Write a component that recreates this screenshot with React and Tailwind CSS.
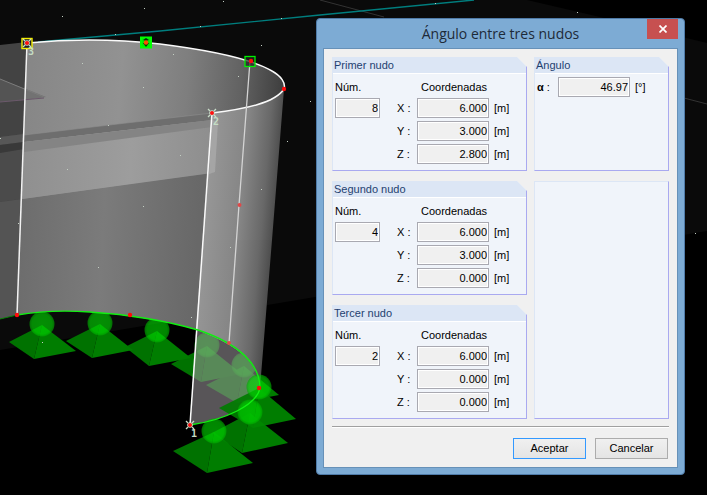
import React from 'react';

const nodes = [
  { id: 'primer', title: 'Primer nudo', num: '8', x: '6.000', y: '3.000', z: '2.800' },
  { id: 'segundo', title: 'Segundo nudo', num: '4', x: '6.000', y: '3.000', z: '0.000' },
  { id: 'tercer', title: 'Tercer nudo', num: '2', x: '6.000', y: '0.000', z: '0.000' },
];

// apex of every support, with its left, bottom and right corners
const backSupports = [
  { x: 42, y: 325, l: [9, 342], b: [34, 359], r: [76, 351] },
  { x: 100, y: 324, l: [66, 341], b: [92, 358], r: [133, 350] },
  { x: 157, y: 331, l: [125, 347], b: [149, 366], r: [191, 358] },
  { x: 207, y: 346, l: [171, 364], b: [201, 382], r: [242, 374] },
  { x: 244, y: 366, l: [206, 385], b: [237, 403], r: [279, 395] },
];

const frontSupports = [
  { x: 259, y: 388, l: [219, 408], b: [253, 428], r: [296, 419] },
  { x: 250, y: 413, l: [212, 433], b: [242, 453], r: [288, 443] },
  { x: 214, y: 432, l: [173, 451], b: [207, 473], r: [253, 463] },
];

const stars = [
  [62, 16], [144, 8], [223, 1], [200, 26], [115, 34], [281, 18], [261, 45], [82, 63],
  [173, 54], [143, 87], [238, 76], [310, 101], [287, 141], [180, 155], [108, 125],
  [67, 169], [143, 206], [98, 267], [261, 189], [230, 247], [191, 317], [42, 342],
  [0, 138], [18, 223], [435, 3], [577, 12], [695, 233],
];

const redDots = [
  [284, 89], [251, 61], [17, 315], [130, 315], [259, 388],
];

function Support({ x, y, l, b, r }) {
  return (
    <g>
      <path d={`M${x} ${y} L${l[0]} ${l[1]} L${b[0]} ${b[1]} Z`} fill="#007c00" fillOpacity="0.92" />
      <path d={`M${x} ${y} L${b[0]} ${b[1]} L${r[0]} ${r[1]} Z`} fill="#008800" fillOpacity="0.92" />
      <circle cx={x} cy={y - 1} r="12.5" fill="url(#ball)" fillOpacity="0.62" />
    </g>
  );
}

function Cross({ x, y }) {
  return (
    <path
      d={`M${x - 4} ${y - 4} l8 8 M${x + 4} ${y - 4} l-8 8 M${x} ${y - 3} v6 M${x - 3} ${y} h6`}
      stroke="#c8dcc8"
      strokeWidth="1.3"
    />
  );
}

function Scene() {
  return (
    <svg
      className="absolute inset-0 h-full w-full"
      viewBox="0 0 707 495"
      preserveAspectRatio="xMinYMin slice"
      fill="none"
      aria-hidden="true"
    >
      <defs>
        <linearGradient id="wall" gradientUnits="userSpaceOnUse" x1="20" y1="0" x2="286" y2="20">
          <stop offset="0" stopColor="#858585" />
          <stop offset="0.4" stopColor="#929292" />
          <stop offset="0.65" stopColor="#7e7e7e" />
          <stop offset="0.85" stopColor="#626262" />
          <stop offset="1" stopColor="#404040" />
        </linearGradient>
        <linearGradient id="lower" gradientUnits="userSpaceOnUse" x1="20" y1="0" x2="210" y2="10">
          <stop offset="0" stopColor="#6b6b6b" />
          <stop offset="0.5" stopColor="#7b7b7b" />
          <stop offset="1" stopColor="#686868" />
        </linearGradient>
        <linearGradient id="band" gradientUnits="userSpaceOnUse" x1="20" y1="0" x2="218" y2="10">
          <stop offset="0" stopColor="#8e8e8e" />
          <stop offset="0.6" stopColor="#9d9d9d" />
          <stop offset="1" stopColor="#8e8e8e" />
        </linearGradient>
        <linearGradient id="front" gradientUnits="userSpaceOnUse" x1="205" y1="200" x2="278" y2="206">
          <stop offset="0" stopColor="#979797" />
          <stop offset="0.5" stopColor="#858585" />
          <stop offset="0.8" stopColor="#686868" />
          <stop offset="1" stopColor="#484848" />
        </linearGradient>
        <linearGradient id="frontLow" gradientUnits="userSpaceOnUse" x1="195" y1="300" x2="269" y2="306">
          <stop offset="0" stopColor="#979797" />
          <stop offset="0.5" stopColor="#858585" />
          <stop offset="0.8" stopColor="#686868" />
          <stop offset="1" stopColor="#484848" />
        </linearGradient>
        <radialGradient id="ball">
          <stop offset="0" stopColor="#00e000" />
          <stop offset="0.8" stopColor="#00d800" />
          <stop offset="1" stopColor="#00a800" />
        </radialGradient>
      </defs>

      {/* ground plane and grid lines */}
      <path d="M0 0 H527 L600 17 L707 43 V231 L0 350 Z" fill="#0a0a0a" />
      <path d="M320 0 L384 17 M684 98 L707 104" stroke="#333" />
      <path d="M38 42 L160 31 L320 15 L474 0" stroke="#007e7e" strokeWidth="1.4" />

      {backSupports.map((s) => (
        <Support key={s.x} {...s} />
      ))}

      {/* dark outer side on the left */}
      <path d="M0 45 L27 42 L17 315 L0 319 Z" fill="#434343" />
      <path d="M0 137 L24 134 L22 199 L0 202 Z" fill="#4b4b4b" />
      <path d="M0 137 L24 134 V142 L0 145 Z" fill="#575757" />
      <path d="M0 145 L24 142 V149 L0 153 Z" fill="#393939" />
      <path d="M0 202 L22 199 L17 315 L0 319 Z" fill="#545454" />

      {/* curved wall */}
      <path
        d="M27 43 C70 39 115 39 160 44 C200 49 250 58 272 71 C281 76 286 83 284 89 C275 103 245 109 212 113 L198 330 C160 319 120 314 90 312 C60 310 40 311 17 315 Z"
        fill="url(#wall)"
      />
      <path d="M22 199 L150 181 L212 173 L198 330 C160 319 120 314 90 312 C60 310 40 311 17 315 Z" fill="url(#lower)" />
      <path d="M24 135 L212 113 L212 120 L24 142 Z" fill="#6e6e6e" />
      <path d="M24 135 L212 113" stroke="#8e8e8e" strokeOpacity="0.6" />
      <path d="M24 142 L212 120 L212 173 L22 199 Z" fill="url(#band)" />
      <path d="M24 142 L212 120 V127 L24 152 Z" fill="#848484" />
      <path d="M0 79 L26 89 L25 100 L0 102 Z" fill="#545454" />
      <path d="M26 89 L46 97 L25 100 Z" fill="#727272" />
      <path d="M0 79 L44 97" stroke="#7c7c7c" />
      <path d="M0 102 L44 98" stroke="#6b586b" />

      {/* front strip */}
      <path d="M212 113 C245 109 275 103 284 89 L272 240 L203 240 Z" fill="url(#front)" />
      <path d="M203 240 L272 240 L260 388 C259 365 240 346 196 330 Z" fill="url(#frontLow)" />
      <path d="M212 120 L218 122 L215 172 L209 174 Z" fill="#a9a9a9" fillOpacity="0.8" />
      <path
        d="M196 330 C240 346 259 365 260 388 C257 405 225 420 190 425 Z"
        fill="#989398"
        fillOpacity="0.58"
      />

      {frontSupports.map((s) => (
        <Support key={s.x} {...s} />
      ))}

      {/* edges */}
      <path
        d="M27 43 C70 39 115 39 160 44 C200 49 250 58 272 71 C281 76 286 83 284 89 C275 103 245 109 212 113"
        stroke="#fafafa"
        strokeWidth="1.5"
      />
      <path d="M27 43 L17 315" stroke="#f2f2f2" strokeWidth="1.5" />
      <path d="M212 113 L190 425" stroke="#fafafa" strokeWidth="1.5" />
      <path d="M250 61 L239 205 L229 343" stroke="#d4d4d4" strokeWidth="1.3" />
      <path d="M0 319 L17 315" stroke="#078007" />
      <path
        d="M17 315 C40 311 60 310 90 312 C120 314 160 319 198 330 C240 344 260 365 260 388 C257 405 225 420 190 425"
        stroke="#12ee12"
        strokeWidth="1.4"
      />

      {stars.map(([x, y]) => (
        <rect key={`${x}-${y}`} x={x} y={y} width="1" height="1" fill="#c4d0c4" />
      ))}

      {/* selected nodes */}
      <rect x="22" y="38.5" width="10" height="10" fill="#222" stroke="#f4ee00" strokeWidth="1.4" />
      <Cross x={27} y={43} />
      <circle cx="27" cy="43" r="2.1" fill="#ff1010" />
      <rect x="141" y="37.5" width="10" height="10" fill="#00f000" stroke="#00ff00" strokeWidth="2" />
      <path d="M146 38 l3 2 l-3 1 l-3 -1 Z M143 43 l3 4 l3 -4 Z" fill="#0a2a0a" />
      <circle cx="146" cy="42.5" r="2.2" fill="#ff5000" />
      <rect x="245" y="56.5" width="10" height="10" fill="#222" fillOpacity="0.7" stroke="#00ef00" strokeWidth="1.3" />
      <Cross x={212} y={113} />
      <circle cx="212" cy="113" r="2" fill="#ff1010" />
      <Cross x={190} y={425} />
      <circle cx="190" cy="425" r="2" fill="#ff1010" />
      {redDots.map(([x, y]) => (
        <circle key={`${x}-${y}`} cx={x} cy={y} r="2.2" fill="#ff0a0a" />
      ))}
      <circle cx="239.5" cy="205" r="2" fill="#e04848" />
      <circle cx="229" cy="343" r="2" fill="#e04848" />

      <g fill="#c4dcc4" fontFamily="'DejaVu Sans Mono', monospace" fontSize="10" fontWeight="bold">
        <text x="28" y="55">3</text>
        <text x="213" y="125">2</text>
        <text x="191" y="437">1</text>
      </g>
    </svg>
  );
}

function Panel({ title, className = '', children }) {
  return (
    <section
      className={`border-r border-b border-l border-l-[#dce6f5] border-r-[#a9a9f0] border-b-[#a9a9f0] bg-[#f0f4fa] [clip-path:polygon(0_0,calc(100%_-_10px)_0,100%_10px,100%_100%,0_100%)] ${className}`}
    >
      <h2 className="h-[17px] border-b border-white bg-[#dce6f5] pl-px leading-4 text-[#1f3f70]">{title}</h2>
      {children}
    </section>
  );
}

function Field({ id, value, className }) {
  return (
    <input
      id={id}
      defaultValue={value}
      readOnly
      className={`h-5 border border-[#a9a9b1] bg-[#f0f0f0] pr-px text-right text-black shadow-[inset_0_0_0_1px_#fff] outline-none ${className}`}
    />
  );
}

function NodePanel({ node }) {
  return (
    <Panel title={node.title}>
      <div className="grid grid-cols-[62px_20px_77px_1fr] items-center gap-y-[3px] pt-[5px] pb-[6px] pl-[2px]">
        <label htmlFor={`${node.id}-num`} className="leading-4">Núm.</label>
        <span className="col-span-3 pl-6 leading-4">Coordenadas</span>

        <Field id={`${node.id}-num`} value={node.num} className="w-[45px]" />
        {['x', 'y', 'z'].map((axis) => (
          <React.Fragment key={axis}>
            <label htmlFor={`${node.id}-${axis}`} className="col-start-2">{axis.toUpperCase()} :</label>
            <Field id={`${node.id}-${axis}`} value={node[axis]} className="w-[72px]" />
            <span>[m]</span>
          </React.Fragment>
        ))}
      </div>
    </Panel>
  );
}

function AngleDialog() {
  return (
    <div
      role="dialog"
      aria-labelledby="dialog-title"
      className="relative w-[369px] rounded-[4px] border border-[#4f7ba8] bg-[#7dabd4] px-[6px] pb-[6px] text-[11px] text-black"
    >
      <header className="relative flex h-[29px] items-center justify-center">
        <h1 id="dialog-title" className="font-['Open_Sans',sans-serif] text-[14px] text-[#1d2a38]">
          Ángulo entre tres nudos
        </h1>
        <button
          type="button"
          aria-label="Cerrar"
          className="absolute top-0 right-0 flex h-5 w-[31px] items-center justify-center bg-[#c75050]"
        >
          <svg className="h-2 w-2" viewBox="0 0 8 8" stroke="#fff" strokeWidth="1.7">
            <path d="M0.5 0.5 L7.5 7.5 M7.5 0.5 L0.5 7.5" />
          </svg>
        </button>
      </header>

      <form className="border border-[#6791b8] bg-[#f0f0f0] p-2">
        <div className="flex gap-[7px]">
          <div className="flex flex-1 flex-col gap-[10px]">
            {nodes.map((node) => (
              <NodePanel key={node.id} node={node} />
            ))}
          </div>
          <div className="flex w-[135px] flex-col gap-[10px]">
            <Panel title="Ángulo" className="h-[114px]">
              <div className="grid grid-cols-[21px_77px_1fr] items-center pt-[3px] pl-[2px]">
                <label htmlFor="alpha"><b>α</b> :</label>
                <Field id="alpha" value="46.97" className="w-[72px]" />
                <span>[°]</span>
              </div>
            </Panel>
            <div className="flex-1 border border-t-[#dce6f5] border-r-[#a9a9f0] border-b-[#a9a9f0] border-l-[#dce6f5] bg-[#f0f4fa]" />
          </div>
        </div>

        <hr className="mt-[7px] h-[2px] border-t border-b border-t-[#a0a0a0] border-b-white" />

        <div className="mt-[10px] flex justify-end gap-[9px] pr-px">
          <button
            type="button"
            className="h-[21px] w-[73px] border border-[#3399ff] bg-linear-to-b from-[#f0f0f0] to-[#e4e4e4]"
          >
            Aceptar
          </button>
          <button
            type="button"
            className="h-[21px] w-[73px] border border-[#acacac] bg-linear-to-b from-[#f0f0f0] to-[#e4e4e4]"
          >
            Cancelar
          </button>
        </div>
      </form>
    </div>
  );
}

export default function App() {
  return (
    <main className="relative flex min-h-screen items-start justify-end overflow-hidden bg-black pt-[18px] pr-[22px] pb-5 font-['Liberation_Sans',Arial,sans-serif]">
      <Scene />
      <AngleDialog />
    </main>
  );
}
